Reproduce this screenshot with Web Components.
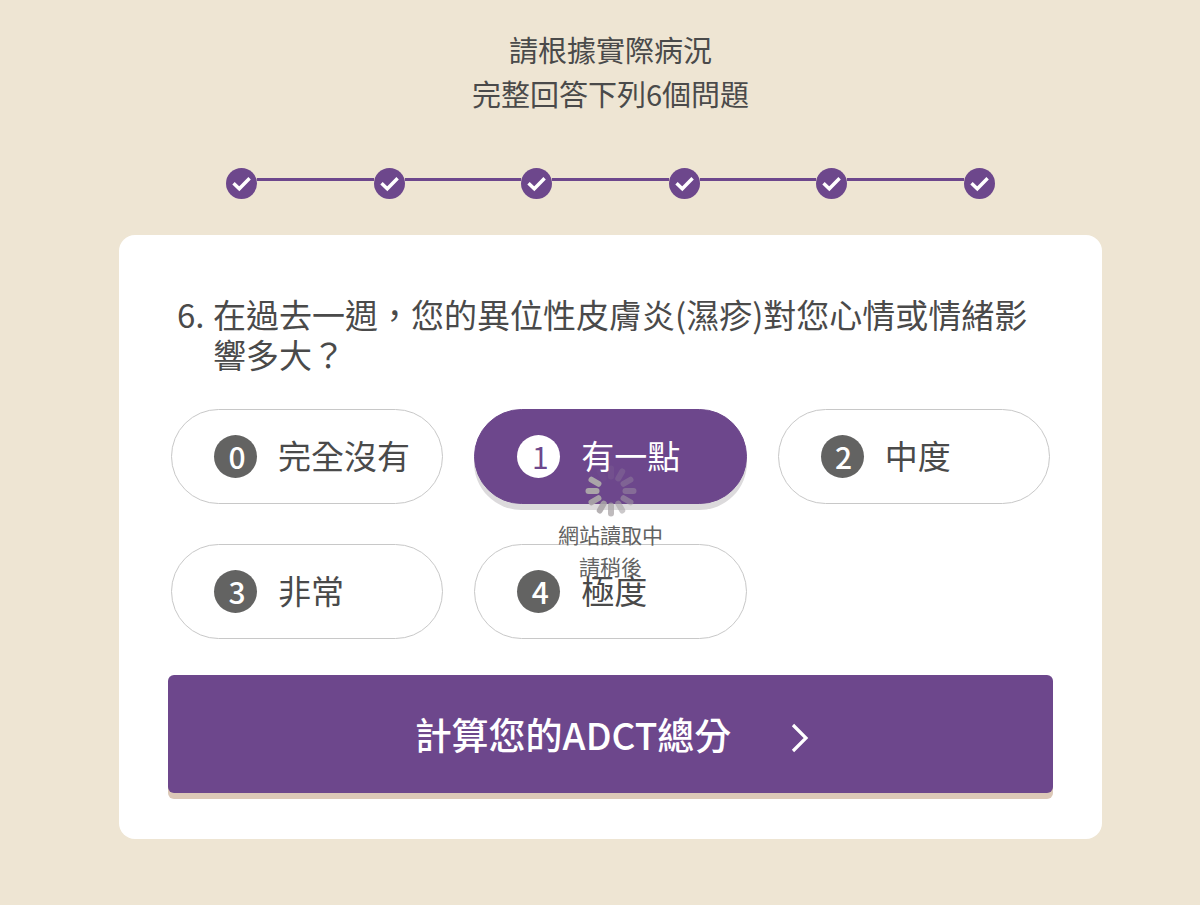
<!DOCTYPE html>
<html lang="zh-Hant">
<head>
  <meta charset="UTF-8">
  <meta name="viewport" content="width=device-width, initial-scale=1">
  <title>ADCT</title>
  <style>
    body {
      margin: 0;
      background: #eee5d3;
      color: #4a4a4a;
      font-family: "Noto Sans CJK TC", sans-serif;
    }

    main {
      padding: 27px 98px 66px 119px;
    }

    h1 {
      margin: 0 0 53px;
      font-size: 29px;
      font-weight: 400;
      line-height: 44px;
      text-align: center;
    }
  </style>
</head>
<body>
  <main>
    <h1>請根據實際病況<br>完整回答下列6個問題</h1>
    <step-progress steps="6"></step-progress>
    <question-card>
      <span slot="number">6.</span>
      <span slot="question">在過去一週，您的異位性皮膚炎(濕疹)對您心情或情緒影響多大？</span>
      <answer-options options="完全沒有,有一點,中度,非常,極度" selected="1"></answer-options>
      <submit-button slot="action">計算您的ADCT總分</submit-button>
      <loading-indicator slot="overlay">網站讀取中<br>請稍後</loading-indicator>
    </question-card>
  </main>
<script>
  class StepProgress extends HTMLElement {
    constructor() {
      super();
      this.attachShadow({mode: "open"});
    }

    connectedCallback() {
      const steps = Number(this.getAttribute("steps"));
      const step = `
        <li>
          <svg viewBox="0 0 31 31" aria-hidden="true">
            <circle cx="15.5" cy="15.5" r="15.5" fill="#6d478c"/>
            <path d="M7.5 15.2 L13.3 20.8 L23.6 10.2" fill="none" stroke="#fff" stroke-width="3.4"/>
          </svg>
        </li>
      `;

      this.shadowRoot.innerHTML = `
        <style>
          :host {
            display: block;
            padding: 0 107px;
          }

          ol {
            display: flex;
            margin: 0;
            padding: 0;
            list-style: none;
          }

          li {
            display: flex;
            flex: 1;
          }

          li:first-child {
            flex: none;
          }

          li + li::before {
            content: "";
            flex: 1;
            height: 3px;
            margin-top: 10px;
            background: #6d478c;
          }

          svg {
            display: block;
            width: 31px;
            height: 31px;
          }
        </style>
        <ol>${step.repeat(steps)}</ol>
      `;
    }
  }

  class QuestionCard extends HTMLElement {
    constructor() {
      super();
      this.attachShadow({mode: "open"});
      this.shadowRoot.innerHTML = `
        <style>
          :host {
            display: block;
            position: relative;
            margin-top: 36px;
            padding: 59px 49px 46px;
            border-radius: 16px;
            background: #fff;
          }

          h2 {
            display: flex;
            margin: 0 9px 35px;
            font-size: 33px;
            font-weight: 400;
            line-height: 40px;
          }

          .number {
            flex: none;
            width: 36px;
          }
        </style>
        <h2>
          <span class="number"><slot name="number"></slot></span>
          <span><slot name="question"></slot></span>
        </h2>
        <slot></slot>
        <slot name="action"></slot>
        <slot name="overlay"></slot>
      `;
    }
  }

  class AnswerOptions extends HTMLElement {
    constructor() {
      super();
      this.attachShadow({mode: "open"});
    }

    connectedCallback() {
      const options = this.getAttribute("options").split(",");
      const selected = Number(this.getAttribute("selected"));

      this.shadowRoot.innerHTML = `
        <style>
          :host {
            display: block;
            padding: 0 3px;
          }

          form {
            display: grid;
            grid-template-columns: repeat(3, 1fr);
            gap: 40px 31px;
          }

          label {
            display: flex;
            align-items: center;
            gap: 21px;
            box-sizing: border-box;
            min-height: 95px;
            padding: 0 16px 0 42px;
            border: 1px solid #c8c8c8;
            border-radius: 48px;
            font-size: 33px;
            line-height: 40px;
            cursor: pointer;
          }

          .badge {
            display: grid;
            flex: none;
            place-items: center;
            width: 43px;
            height: 43px;
            border-radius: 50%;
            background: #636362;
            color: #fff;
            font-size: 30px;
            font-weight: 500;
          }

          .badge > * {
            grid-area: 1 / 1;
          }

          .badge span {
            padding: 0 0 2px 3px;
          }

          .text {
            padding-bottom: 4px;
          }

          input {
            appearance: none;
            width: 43px;
            height: 43px;
            margin: 0;
            border-radius: 50%;
            cursor: pointer;
          }

          label:has(:checked) {
            border-color: #6d478c;
            background: #6d478c;
            box-shadow: 0 6px 0 #dcdadc;
            color: #fff;
          }

          label:has(:checked) .badge {
            background: #fff;
            color: #6d478c;
            font-weight: 400;
          }
        </style>
        <form>
          ${options.map((text, score) => `
            <label>
              <span class="badge">
                <input type="radio" name="answer" value="${score}" ${score === selected ? "checked" : ""}>
                <span>${score}</span>
              </span>
              <span class="text">${text}</span>
            </label>
          `).join("")}
        </form>
      `;
    }
  }

  class SubmitButton extends HTMLElement {
    constructor() {
      super();
      this.attachShadow({mode: "open"});
      this.shadowRoot.innerHTML = `
        <style>
          :host {
            display: block;
            margin-top: 36px;
          }

          button {
            display: flex;
            align-items: center;
            justify-content: center;
            gap: 60px;
            width: 100%;
            min-height: 118px;
            padding: 0 0 0 3px;
            border: 0;
            border-radius: 6px;
            background: #6d478c;
            box-shadow: 0 6px 0 #dcc8b7;
            color: #fff;
            font-family: inherit;
            font-size: 37px;
            font-weight: 500;
            line-height: 48px;
            cursor: pointer;
          }

          svg {
            width: 18px;
            height: 30px;
            margin-top: 8px;
          }
        </style>
        <button type="button">
          <span><slot></slot></span>
          <svg viewBox="0 0 18 30" aria-hidden="true">
            <path d="M2 2 L15 15 L2 28" fill="none" stroke="#fff" stroke-width="3.2"/>
          </svg>
        </button>
      `;
    }
  }

  class LoadingIndicator extends HTMLElement {
    constructor() {
      super();
      this.attachShadow({mode: "open"});

      // strongest blade at ten o'clock, fading counterclockwise
      const opacities = [1, 1, 0.95, 0.85, 0.75, 0.6, 0.5, 0.4, 0.3, 0.2, 0.1, 0.03];
      const blades = opacities.map((opacity, i) => `
        <line x1="26" y1="3.5" x2="26" y2="11.5" opacity="${opacity}" transform="rotate(${300 - i * 30} 26 26)"/>
      `).join("");

      this.shadowRoot.innerHTML = `
        <style>
          :host {
            display: flex;
            flex-direction: column;
            align-items: center;
            justify-content: center;
            gap: 1px;
            position: absolute;
            inset: 0 0 28px;
            color: #636363;
            font-size: 21px;
            line-height: 32px;
            text-align: center;
            pointer-events: none;
          }

          svg {
            width: 52px;
            height: 52px;
          }
        </style>
        <svg viewBox="0 0 52 52" aria-hidden="true" stroke="#aaa5a8" stroke-width="6" stroke-linecap="round">${blades}</svg>
        <div role="status"><slot></slot></div>
      `;
    }
  }

  customElements.define("step-progress", StepProgress);
  customElements.define("question-card", QuestionCard);
  customElements.define("answer-options", AnswerOptions);
  customElements.define("submit-button", SubmitButton);
  customElements.define("loading-indicator", LoadingIndicator);
</script>
</body>
</html>
